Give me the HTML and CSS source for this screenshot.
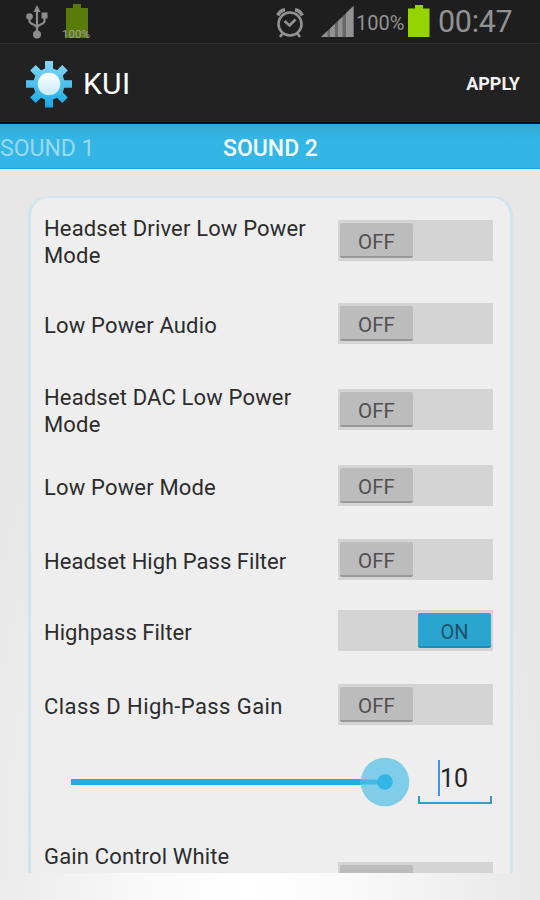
FILE: index.html
```
<!DOCTYPE html>
<html lang="en">
<head>
<meta charset="utf-8">
<title>KUI</title>
<link rel="stylesheet" href="styles.css">
</head>
<body>
<div class="screen">
  <header class="status">
    <svg class="usb" width="22" height="34" viewBox="0 0 22 34" fill="none" stroke="#8d8d8d" stroke-width="2.2"><path d="M11 6V28M3.500 12v4c0 4 7.500 3 7.500 7M18.500 11v5c0 4-7.500 3-7.500 7"/><g fill="#8d8d8d" stroke="none"><path d="M11 0l3.500 7h-7z"/><circle cx="3.500" cy="11.500" r="3.300"/><path d="M15.500 7.500h6v6h-6z"/><circle cx="11" cy="29.500" r="4"/></g></svg>
    <div class="charge"><svg width="24" height="35" viewBox="0 0 24 35"><path d="M8 0h8v4h7v30H1V4h7z" fill="#587b0b"/></svg><span class="charge-text">100%</span></div>
    <svg class="alarm" width="28" height="30" viewBox="0 0 28 30" fill="none" stroke="#929292" stroke-width="2.600"><circle cx="14" cy="16" r="11.500"/><path d="M8.500 13l5 4.500 6-6M7 25l-3 4M21 25l3 4"/><path d="M1.800 7.500Q4 2.500 9 1.800M26.200 7.500Q24 2.500 19 1.800" stroke-width="3.600"/></svg>
    <svg class="signal" width="33" height="31" viewBox="0 0 33 31"><path d="M0 31L32.500 0V31z" fill="#686868"/><path d="M0 31L6.500 25V31zM9 31V22.500L14 18V31zM17 31V15L21.500 11V31zM25 31V7L32.500 0V31z" fill="#929292"/></svg>
    <span class="percent">100%</span>
    <svg class="battery" width="22" height="32" viewBox="0 0 22 32"><path d="M7 0h8v3.500h6.500V32H0V3.500h7z" fill="#96d400"/></svg>
    <span class="clock">00:47</span>
  </header>
  <div class="actionbar">
    <svg class="gear" width="48" height="48" viewBox="-24 -24 48 48">
      <defs>
        <linearGradient id="body" gradientUnits="userSpaceOnUse" x1="0" y1="-23" x2="0" y2="23"><stop offset="0" stop-color="#86d9f8"/><stop offset="1" stop-color="#16a9e5"/></linearGradient>
        <linearGradient id="hub" x1="0" y1="0" x2="0" y2="1"><stop offset="0" stop-color="#fff"/><stop offset="1" stop-color="#c5e9fa"/></linearGradient>
      </defs>
      <path fill="url(#body)" d="M-4-23H4V-15.500L8-13.700 13.300-19 18.800-13.500 13.700-8.300 15.300-3.700H23V3.700H15.300L13.700 8.300 18.800 13.500 13.300 19 8 13.700 4 15.500V23.500H-4V15.500L-8 13.700-13.300 19-18.800 13.500-13.700 8.300-15.300 3.700H-23V-3.700H-15.300L-13.700-8.300-18.800-13.500-13.300-19-8-13.700-4-15.500z"/>
      <circle r="11.300" fill="url(#hub)"/>
    </svg>
    <h1 class="title">KUI</h1>
    <span class="apply">APPLY</span>
  </div>
  <nav class="tabs"><span class="tab">SOUND 1</span><span class="tab active">SOUND 2</span></nav>
  <main class="content">
    <section class="card">
      <div class="row r1"><span class="label">Headset Driver Low Power<br>Mode</span><div class="switch"><span class="thumb">OFF</span></div></div>
      <div class="row r2"><span class="label">Low Power Audio</span><div class="switch"><span class="thumb">OFF</span></div></div>
      <div class="row r3"><span class="label">Headset DAC Low Power<br>Mode</span><div class="switch"><span class="thumb">OFF</span></div></div>
      <div class="row r4"><span class="label">Low Power Mode</span><div class="switch"><span class="thumb">OFF</span></div></div>
      <div class="row r5"><span class="label">Headset High Pass Filter</span><div class="switch"><span class="thumb">OFF</span></div></div>
      <div class="row r6"><span class="label">Highpass Filter</span><div class="switch on"><span class="thumb">ON</span></div></div>
      <div class="row r7"><span class="label">Class D High-Pass Gain</span><div class="switch"><span class="thumb">OFF</span></div></div>
      <div class="gain">
        <svg class="slider" width="340" height="50" viewBox="0 0 340 50"><path d="M0 25H315" stroke="#20ade0" stroke-width="6"/><circle cx="314" cy="25" r="24.300" fill="#80cdea"/><path d="M289 25H314" stroke="#42b8e4" stroke-width="5"/><circle cx="314" cy="25" r="7.800" fill="#33b5e5"/></svg>
        <div class="field"><span class="caret"></span><span>10</span></div>
      </div>
      <div class="row last"><span class="label">Gain Control White</span><div class="switch"><span class="thumb"></span></div></div>
    </section>
  </main>
</div>
</body>
</html>
```
FILE: styles.css
```
* { box-sizing: border-box; }
body { margin: 0; font-family: Roboto, sans-serif; }
.screen {
  width: 540px; height: 900px; overflow: hidden;
  display: flex; flex-direction: column;
  background: radial-gradient(ellipse 300px 640px at 250px 900px, #fff 0%, #fafafa 32%, #eee 72%, #e7e7e7 100%);
}
.status {
  height: 44px; flex: none; display: flex; align-items: flex-start;
  background: #1e1e1e; border-bottom: 1px solid #303030; color: #929292;
}
.usb { margin: 5px 0 0 26px; }
.charge { position: relative; width: 30px; height: 38px; margin: 4px 0 0 14px; padding-left: 3px; }
.charge-text { position: absolute; left: 0; top: 23px; font-size: 11.500px; line-height: 14px; color: #a0a0a0; }
.alarm { margin: 8px 0 0 184px; }
.signal { margin: 6px 0 0 17px; }
.percent { width: 54px; margin-top: 11px; padding-left: 2px; font-size: 20px; line-height: 24px; }
.battery { margin-top: 5px; }
.clock { margin: 4px 0 0 8px; font-size: 30.500px; line-height: 36px; letter-spacing: -0.3px; }
.actionbar {
  height: 80px; flex: none; display: flex; align-items: center; padding: 0 20px 0 25px;
  background: #222; border-bottom: 2px solid #111; color: #fff;
}
.gear { margin-top: 1px; }
.title { margin: 2px 0 0 10px; font-size: 30px; font-weight: 400; line-height: 36px; letter-spacing: 0.3px; }
.apply { margin-left: auto; font-size: 18px; font-weight: 700; color: #f2f2f2; }
.tabs {
  height: 45px; flex: none; display: flex; align-items: center;
  background: linear-gradient(#36a8d4, #33b5e5 14px, #33b5e5); border-bottom: 1px solid #1fa6d8;
  font-size: 23px; color: #99daf2;
}
.tab { width: 223px; padding-top: 4px; }
.active { color: #f4fbff; font-weight: 500; }
.content { height: 704px; flex: none; padding: 27px 27px 0 28px; overflow: hidden; }
.card {
  height: 760px; padding: 0 17px 0 14px; background: #eee;
  border: 3px solid #cde5ee; border-top: 2px solid #d3e6ec; border-radius: 20px;
}
.row { display: flex; align-items: center; justify-content: space-between; }
.r1 { height: 85px; }
.r2 { height: 80px; }
.r3 { height: 92px; }
.r4 { height: 60px; }
.r5 { height: 88px; }
.r6 { height: 54px; }
.r7 { height: 94px; }
.label { margin-left: -1px; padding-top: 3px; font-size: 22px; line-height: 27px; letter-spacing: 0.16px; color: #2c2c2c; white-space: nowrap; }
.r2 .label, .r4 .label, .r5 .label, .r6 .label, .r7 .label { padding-top: 4px; }
.r5 .label { letter-spacing: 0.03px; }
.r6 .label { letter-spacing: 0.03px; }
.r7 .label { letter-spacing: 0.42px; }
.switch { width: 155px; height: 41px; flex: none; display: flex; padding: 3px 2px 2px; background: #d4d4d4; }
.thumb {
  width: 73px; height: 35px; padding-top: 3px; border-radius: 2px;
  background: #bcbcbc; border-bottom: 2px solid #989898;
  color: #505050; font-size: 20.500px; line-height: 33px; text-align: center;
}
.on { justify-content: flex-end; }
.on .thumb { background: #2aa5d0; border-color: #208bb0; color: #1d5368; font-size: 20px; }
.gain { height: 92px; display: flex; align-items: flex-start; padding: 6px 0 0 26px; }
.slider { flex: none; }
.field {
  width: 74px; height: 47px; margin-left: 7px; display: flex; padding-left: 20px;
  font-size: 25px; line-height: 44px; color: #252525;
  background: linear-gradient(#3a9bc8, #3a9bc8) 0 100% / 2px 8px no-repeat, linear-gradient(#3a9bc8, #3a9bc8) 100% 100% / 2px 8px no-repeat, linear-gradient(#3a9bc8, #3a9bc8) 0 100% / 100% 2px no-repeat;
}
.caret { width: 2px; height: 36px; margin-top: 3px; background: #3399ff; }
.last { align-items: flex-start; }
.last .label { padding-top: 0; }
.last .switch { margin-top: 19px; }
```
